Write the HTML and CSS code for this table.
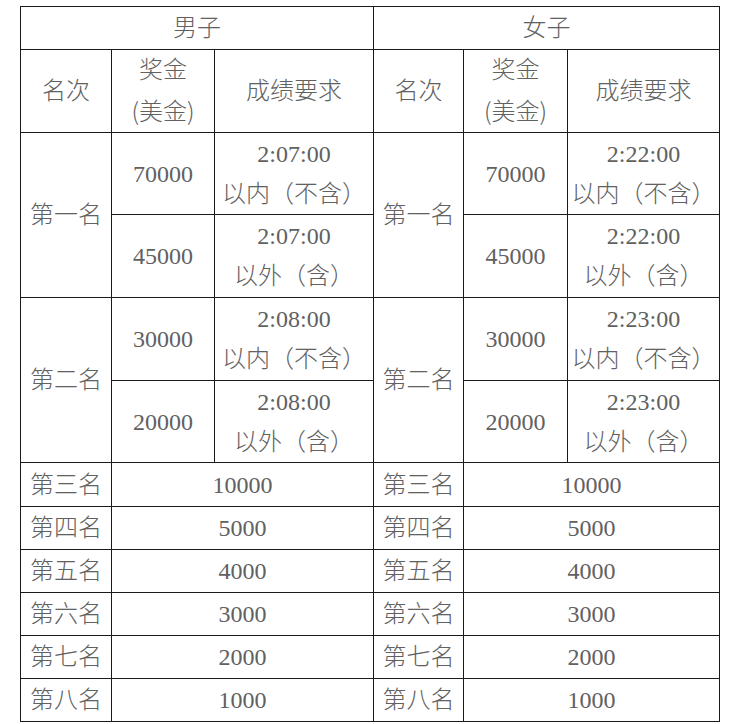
FILE: index.html
```html
<!DOCTYPE html>
<html lang="zh-CN">
<head>
<meta charset="utf-8">
<title>奖金</title>
<link rel="stylesheet" href="styles.css">
</head>
<body>
<div class="wrap">
<table class="prize">
  <colgroup>
    <col class="c1"><col class="c2"><col class="c3">
    <col class="c4"><col class="c5"><col class="c6">
  </colgroup>
  <tr class="r43">
    <td colspan="3">男子</td>
    <td colspan="3">女子</td>
  </tr>
  <tr class="r83">
    <td>名次</td><td>奖金<br><span class="paren">(美金)</span></td><td>成绩要求</td>
    <td>名次</td><td>奖金<br><span class="paren">(美金)</span></td><td>成绩要求</td>
  </tr>
  <tr class="r82">
    <td rowspan="2">第一名</td><td>70000</td><td>2:07:00<br>以内（不含）</td>
    <td rowspan="2">第一名</td><td>70000</td><td>2:22:00<br>以内（不含）</td>
  </tr>
  <tr class="r83">
    <td>45000</td><td>2:07:00<br>以外（含）</td>
    <td>45000</td><td>2:22:00<br>以外（含）</td>
  </tr>
  <tr class="r83">
    <td rowspan="2">第二名</td><td>30000</td><td>2:08:00<br>以内（不含）</td>
    <td rowspan="2">第二名</td><td>30000</td><td>2:23:00<br>以内（不含）</td>
  </tr>
  <tr class="r82">
    <td>20000</td><td>2:08:00<br>以外（含）</td>
    <td>20000</td><td>2:23:00<br>以外（含）</td>
  </tr>
  <tr class="r44">
    <td>第三名</td><td colspan="2">10000</td>
    <td>第三名</td><td colspan="2">10000</td>
  </tr>
  <tr class="r43">
    <td>第四名</td><td colspan="2">5000</td>
    <td>第四名</td><td colspan="2">5000</td>
  </tr>
  <tr class="r43">
    <td>第五名</td><td colspan="2">4000</td>
    <td>第五名</td><td colspan="2">4000</td>
  </tr>
  <tr class="r43">
    <td>第六名</td><td colspan="2">3000</td>
    <td>第六名</td><td colspan="2">3000</td>
  </tr>
  <tr class="r43">
    <td>第七名</td><td colspan="2">2000</td>
    <td>第七名</td><td colspan="2">2000</td>
  </tr>
  <tr class="r43">
    <td>第八名</td><td colspan="2">1000</td>
    <td>第八名</td><td colspan="2">1000</td>
  </tr>
</table>
</div>
</body>
</html>
```

FILE: styles.css
```css
html, body {
  margin: 0;
  padding: 0;
  background: #ffffff;
}

.wrap {
  padding: 6px 0 0 20px;
}

.prize {
  border-collapse: collapse;
  table-layout: fixed;
  width: 700px;
  font-family: "Liberation Serif", "Noto Sans CJK SC", serif;
  font-size: 24px;
  font-weight: 300;
  line-height: 40px;
  color: #616161;
}

.paren {
  font-family: "Noto Sans CJK SC", sans-serif;
}

.prize td {
  border: 1px solid #1a1a1a;
  padding: 0;
  text-align: center;
  vertical-align: middle;
  white-space: nowrap;
}

.c1 { width: 91px; }
.c2 { width: 103px; }
.c3 { width: 159px; }
.c4 { width: 90px; }
.c5 { width: 104px; }
.c6 { width: 152px; }

.r43 td { height: 42px; }
.r44 td { height: 43px; }
.r82 td { height: 81px; }
.r83 td { height: 82px; }
```
